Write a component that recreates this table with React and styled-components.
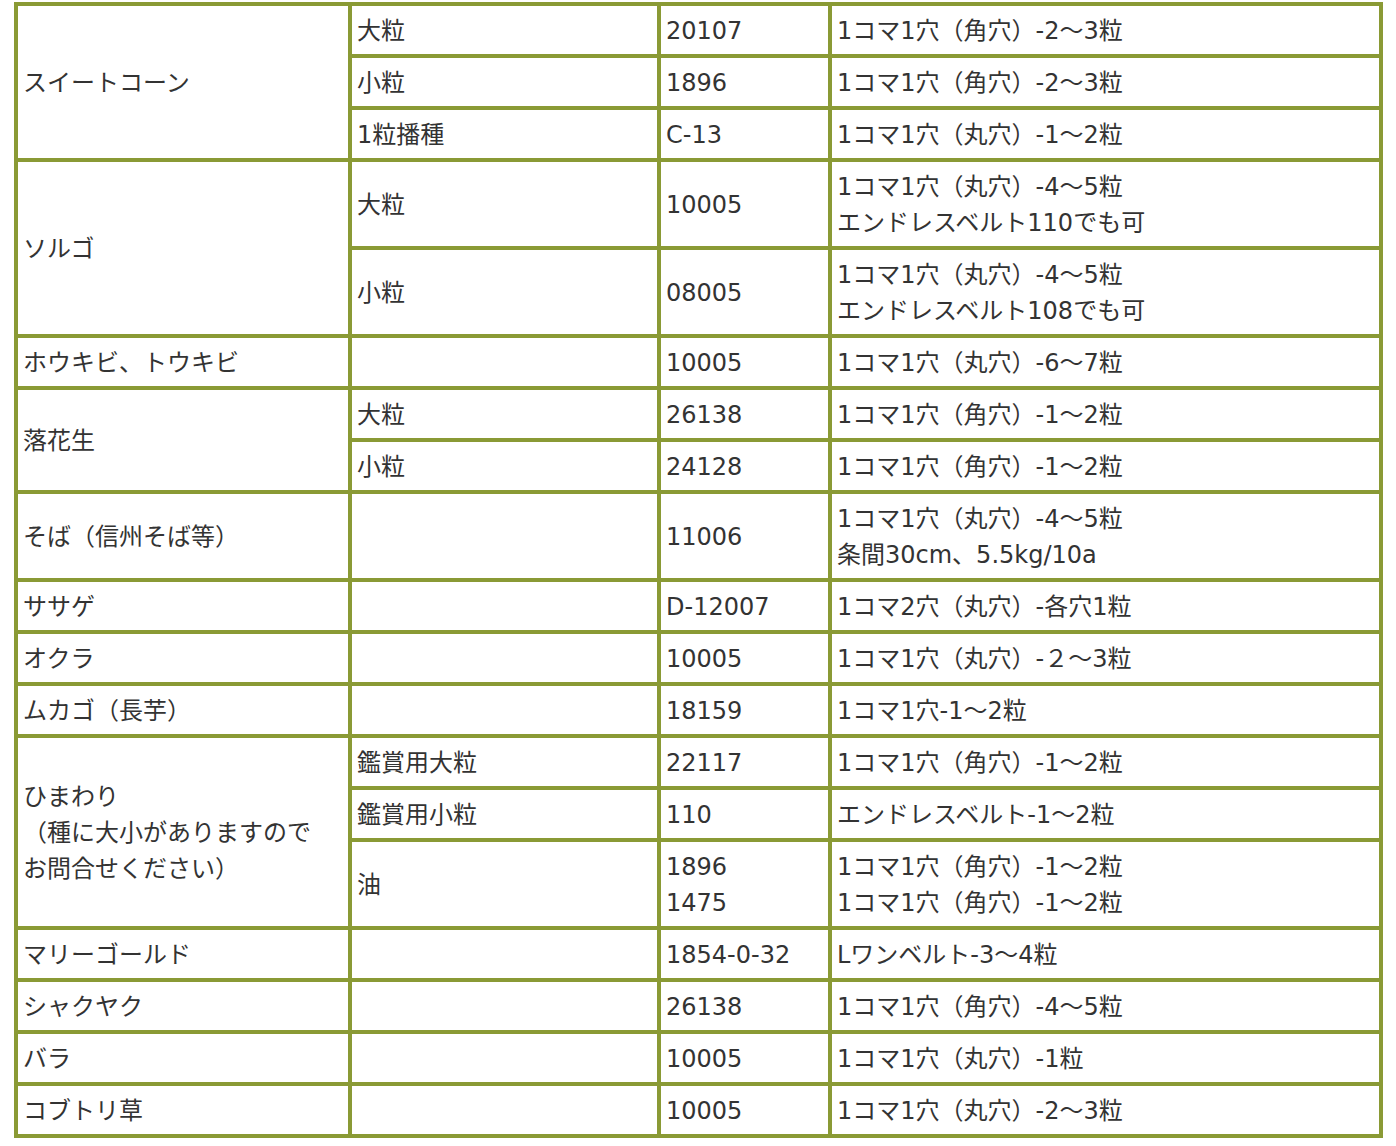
import styled, { createGlobalStyle } from 'styled-components'

const GlobalStyle = createGlobalStyle`
    html, body { margin: 0; padding: 0; background: #fff; }
    body {
        font-family: "DejaVu Sans", "Noto Sans CJK JP", sans-serif;
        color: #333;
    }
`

const Page = styled.main`
    padding: 2px 0 0 14px;
`

const Table = styled.table`
    border-collapse: collapse;
    table-layout: fixed;
    width: 1369px;
    border: 4px solid #8a9a35;
`

const Col = styled.col`
    width: ${(p) => p.$w}px;
`

const Cell = styled.td`
    border: 4px solid #8a9a35;
    padding: 7px 7px 5px 5px;
    font-size: 24px;
    line-height: 36px;
    vertical-align: middle;
    text-align: left;
    white-space: nowrap;
`

const widths = [334, 309, 171, 551]

const rows = [
    { name: 'スイートコーン', items: [
        ['大粒', '20107', '1コマ1穴（角穴）-2～3粒'],
        ['小粒', '1896', '1コマ1穴（角穴）-2～3粒'],
        ['1粒播種', 'C-13', '1コマ1穴（丸穴）-1～2粒'],
    ]},
    { name: 'ソルゴ', items: [
        ['大粒', '10005', '1コマ1穴（丸穴）-4～5粒\nエンドレスベルト110でも可'],
        ['小粒', '08005', '1コマ1穴（丸穴）-4～5粒\nエンドレスベルト108でも可'],
    ]},
    { name: 'ホウキビ、トウキビ', items: [['', '10005', '1コマ1穴（丸穴）-6～7粒']] },
    { name: '落花生', items: [
        ['大粒', '26138', '1コマ1穴（角穴）-1～2粒'],
        ['小粒', '24128', '1コマ1穴（角穴）-1～2粒'],
    ]},
    { name: 'そば（信州そば等）', items: [['', '11006', '1コマ1穴（丸穴）-4～5粒\n条間30cm、5.5kg/10a']] },
    { name: 'ササゲ', items: [['', 'D-12007', '1コマ2穴（丸穴）-各穴1粒']] },
    { name: 'オクラ', items: [['', '10005', '1コマ1穴（丸穴）-２～3粒']] },
    { name: 'ムカゴ（長芋）', items: [['', '18159', '1コマ1穴-1～2粒']] },
    { name: 'ひまわり\n（種に大小がありますので\nお問合せください）', items: [
        ['鑑賞用大粒', '22117', '1コマ1穴（角穴）-1～2粒'],
        ['鑑賞用小粒', '110', 'エンドレスベルト-1～2粒'],
        ['油', '1896\n1475', '1コマ1穴（角穴）-1～2粒\n1コマ1穴（角穴）-1～2粒'],
    ]},
    { name: 'マリーゴールド', items: [['', '1854-0-32', 'Lワンベルト-3～4粒']] },
    { name: 'シャクヤク', items: [['', '26138', '1コマ1穴（角穴）-4～5粒']] },
    { name: 'バラ', items: [['', '10005', '1コマ1穴（丸穴）-1粒']] },
    { name: 'コブトリ草', items: [['', '10005', '1コマ1穴（丸穴）-2～3粒']] },
]

function Lines({ text }) {
    let parts = text.split('\n')
    return parts.map((p, i) => <span key={i}>{p}{i < parts.length - 1 && <br />}</span>)
}

export default function App() {
    return <>
        <GlobalStyle />
        <Page>
            <Table>
                <colgroup>
                    {widths.map((w, i) => <Col key={i} $w={w} />)}
                </colgroup>
                <tbody>
                    {rows.map((r) => r.items.map((it, i) =>
                        <tr key={r.name + i}>
                            {i === 0 && <Cell rowSpan={r.items.length}><Lines text={r.name} /></Cell>}
                            {it.map((c, j) => <Cell key={j}><Lines text={c} /></Cell>)}
                        </tr>
                    ))}
                </tbody>
            </Table>
        </Page>
    </>
}
